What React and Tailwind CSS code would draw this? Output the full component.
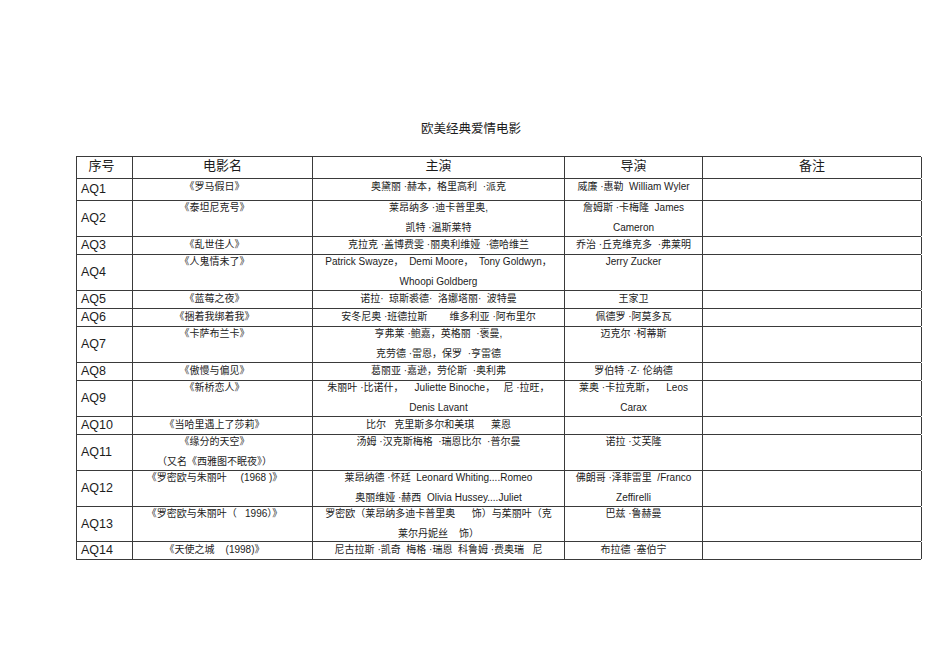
const ROWS = [
  { id: 'AQ1', h: 'h-[22px]', name: ['《罗马假日》'], cast: ['奥黛丽 ·赫本，格里高利  ·派克'], dir: ['威廉 ·惠勒  William Wyler'] },
  { id: 'AQ2', h: 'h-[36px]', two: true, name: ['《泰坦尼克号》'], cast: ['莱昂纳多 ·迪卡普里奥,', '凯特 ·温斯莱特'], dir: ['詹姆斯 ·卡梅隆  James', 'Cameron'] },
  { id: 'AQ3', h: 'h-[18px]', name: ['《乱世佳人》'], cast: ['克拉克 ·盖博费雯 ·丽奥利维娅  ·德哈维兰'], dir: ['乔治 ·丘克维克多  ·弗莱明'] },
  { id: 'AQ4', h: 'h-[36px]', two: true, name: ['《人鬼情未了》'], cast: ['Patrick Swayze，  Demi Moore，  Tony Goldwyn，', 'Whoopi Goldberg'], dir: ['Jerry Zucker'] },
  { id: 'AQ5', h: 'h-[18px]', name: ['《蓝莓之夜》'], cast: ['诺拉·  琼斯裘德·  洛娜塔丽·  波特曼'], dir: ['王家卫'] },
  { id: 'AQ6', h: 'h-[18px]', name: ['《捆着我绑着我》'], cast: ['安冬尼奥 ·班德拉斯        维多利亚 ·阿布里尔'], dir: ['佩德罗 ·阿莫多瓦'] },
  { id: 'AQ7', h: 'h-[36px]', two: true, name: ['《卡萨布兰卡》'], cast: ['亨弗莱 ·鲍嘉，英格丽  ·褒曼,', '克劳德 ·雷恩，保罗  ·亨雷德'], dir: ['迈克尔 ·柯蒂斯'] },
  { id: 'AQ8', h: 'h-[18px]', name: ['《傲慢与偏见》'], cast: ['葛丽亚 ·嘉逊，劳伦斯  ·奥利弗'], dir: ['罗伯特 ·Z· 伦纳德'] },
  { id: 'AQ9', h: 'h-[36px]', two: true, name: ['《新桥恋人》'], cast: ['朱丽叶 ·比诺什，    Juliette Binoche，   尼 ·拉旺，', 'Denis Lavant'], dir: ['莱奥 ·卡拉克斯，    Leos', 'Carax'] },
  { id: 'AQ10', h: 'h-[18px]', name: ['《当哈里遇上了莎莉》'], cast: ['比尔   克里斯多尔和美琪      莱恩'], dir: [] },
  { id: 'AQ11', h: 'h-[36px]', two: true, name: ['《缘分的天空》', '（又名《西雅图不眠夜》）'], cast: ['汤姆 ·汉克斯梅格  ·瑞恩比尔  ·普尔曼'], dir: ['诺拉 ·艾芙隆'] },
  { id: 'AQ12', h: 'h-[36px]', two: true, name: ['《罗密欧与朱丽叶     (1968 )》'], cast: ['莱昂纳德 ·怀廷  Leonard Whiting....Romeo', '奥丽维娅 ·赫西  Olivia Hussey....Juliet'], dir: ['佛朗哥 ·泽菲雷里  /Franco', 'Zeffirelli'] },
  { id: 'AQ13', h: 'h-[35px]', two: true, name: ['《罗密欧与朱丽叶（   1996）》'], cast: ['罗密欧（莱昂纳多迪卡普里奥      饰）与茱丽叶（克', '莱尔丹妮丝    饰）'], dir: ['巴兹 ·鲁赫曼'] },
  { id: 'AQ14', h: 'h-[18px]', name: ['《天使之城    (1998)》'], cast: ['尼古拉斯 ·凯奇  梅格 ·瑞恩  科鲁姆 ·费奥瑞   尼'], dir: ['布拉德 ·塞伯宁'] },
];

function Lines({ lines, two }) {
  return (
    <div className={two ? '-mt-[3px] leading-[20px]' : 'leading-[16px]'}>
      {lines.map((l, i) => (
        <div key={i} className="whitespace-pre">{l}</div>
      ))}
    </div>
  );
}

function Row({ row }) {
  return (
    <div className={`flex border-b border-[#3a3a3a] ${row.h}`}>
      <div className="w-[56px] shrink-0 border-r border-[#3a3a3a] flex items-center pl-[4px] text-[12.5px]">
        {row.id}
      </div>
      <div className="w-[180px] shrink-0 border-r border-[#3a3a3a] text-center pr-[16px] text-[10px] flex justify-center">
        <Lines lines={row.name} two={row.two} />
      </div>
      <div className="w-[252px] shrink-0 border-r border-[#3a3a3a] text-center text-[10px] flex justify-center">
        <Lines lines={row.cast} two={row.two} />
      </div>
      <div className="w-[138px] shrink-0 border-r border-[#3a3a3a] text-center text-[10px] flex justify-center">
        <Lines lines={row.dir} two={row.two} />
      </div>
      <div className="w-[219px] shrink-0 border-r border-[#3a3a3a]" />
    </div>
  );
}

export default function App() {
  return (
    <div className="w-[950px] h-[672px] bg-white text-[#1c1c1c] font-['Liberation_Sans','Noto_Sans_CJK_SC',sans-serif]">
      <div className="pt-[120px]">
        <div className="h-[18px] leading-[18px] text-center text-[12.5px] pr-[8px]">欧美经典爱情电影</div>
        <div className="ml-[76px] mt-[18px] w-[845px] border-t border-l border-[#3a3a3a]">
          <div className="flex h-[22px] border-b border-[#3a3a3a] text-[13px] leading-[18px]">
            <div className="w-[56px] shrink-0 border-r border-[#3a3a3a] text-center pr-[6px]">序号</div>
            <div className="w-[180px] shrink-0 border-r border-[#3a3a3a] text-center">电影名</div>
            <div className="w-[252px] shrink-0 border-r border-[#3a3a3a] text-center">主演</div>
            <div className="w-[138px] shrink-0 border-r border-[#3a3a3a] text-center">导演</div>
            <div className="w-[219px] shrink-0 border-r border-[#3a3a3a] text-center">备注</div>
          </div>
          {ROWS.map(r => (
            <Row key={r.id} row={r} />
          ))}
        </div>
      </div>
    </div>
  );
}
